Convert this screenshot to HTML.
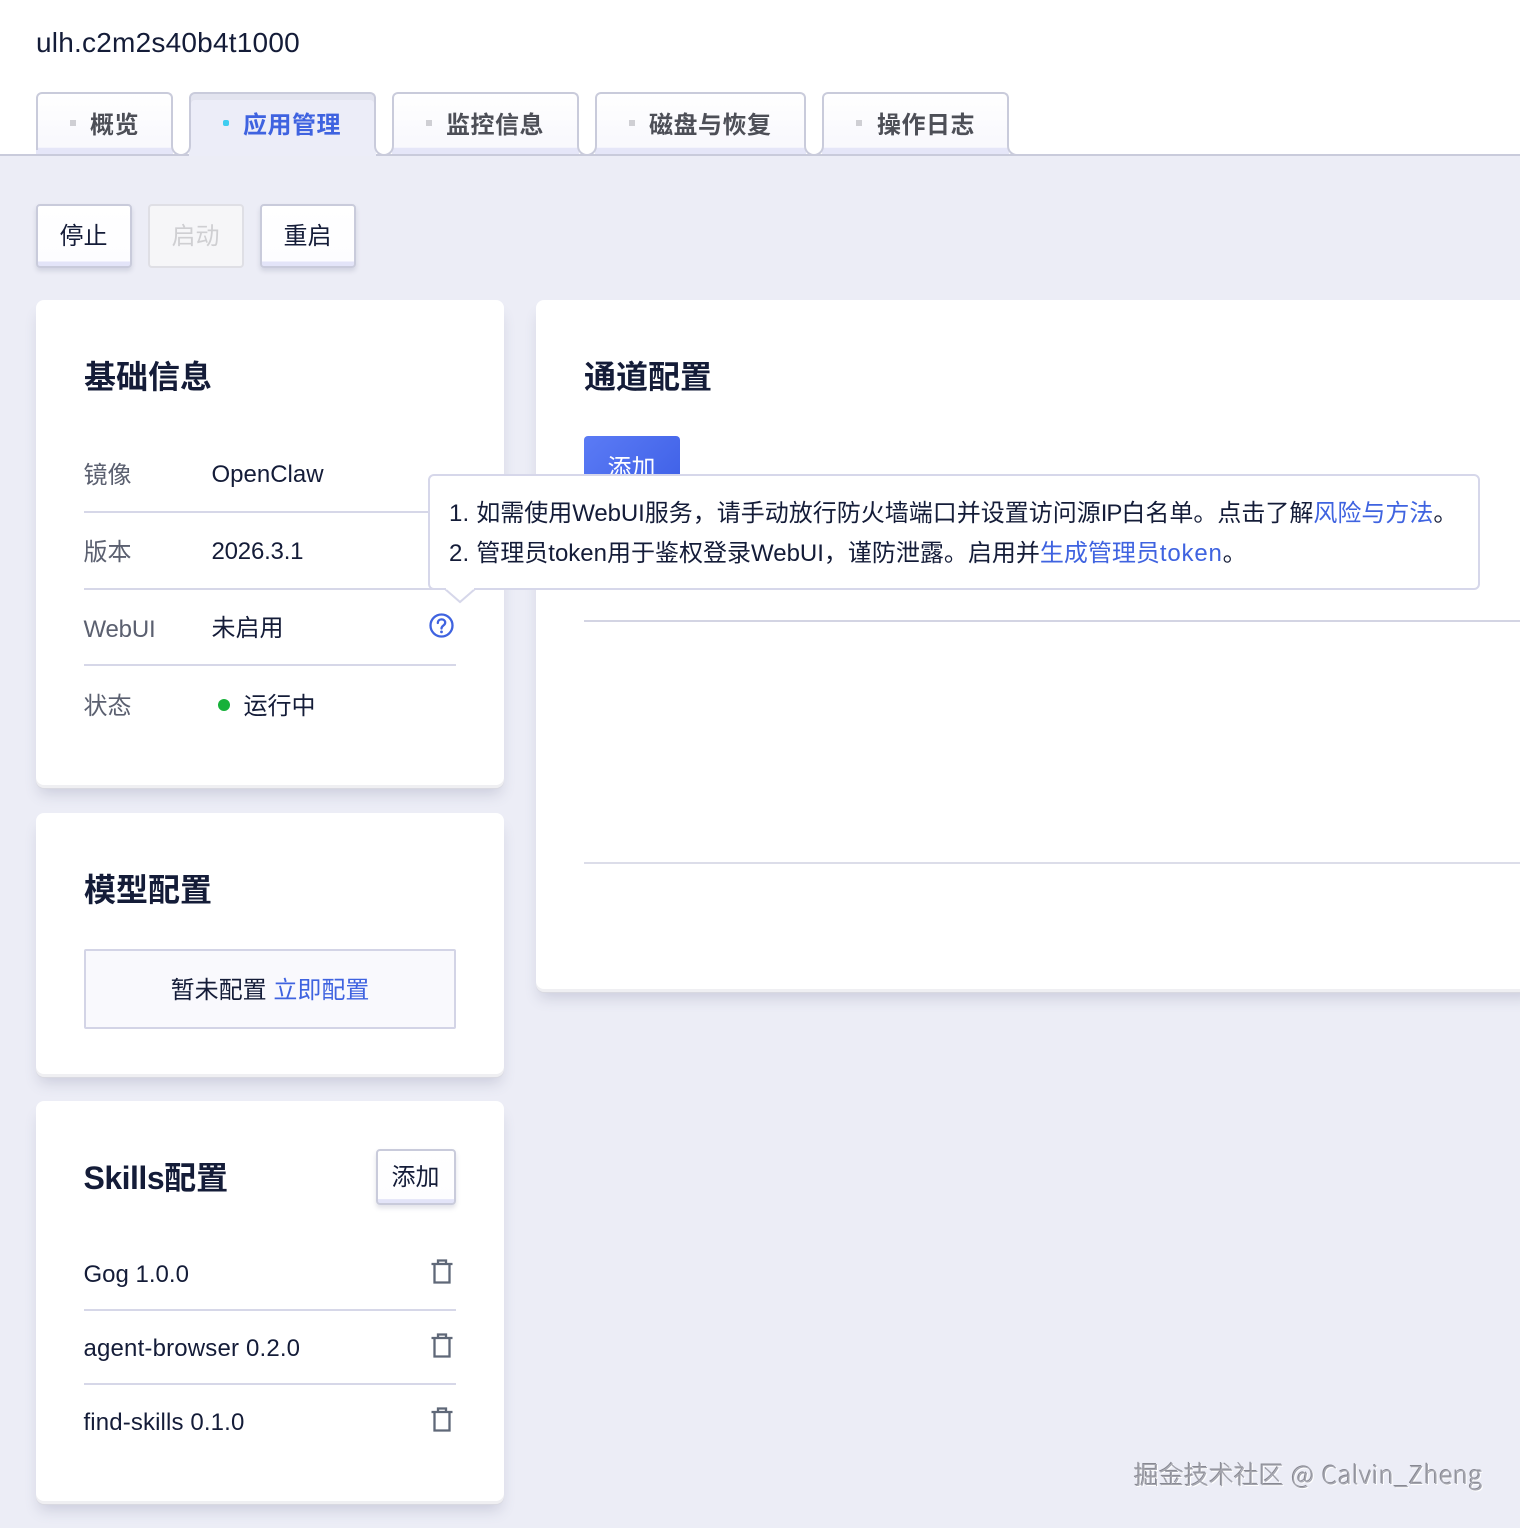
<!DOCTYPE html>
<html lang="zh"><head><meta charset="utf-8"><style>
*{box-sizing:border-box}
html,body{margin:0;padding:0}
body{width:1520px;height:1528px;position:relative;overflow:hidden;background:#ecedf6;font-family:"Liberation Sans","Noto Sans CJK SC",sans-serif;font-size:24px;color:#141c38}
.a{position:absolute;white-space:nowrap;line-height:32px}
.topbar{position:absolute;left:0;top:0;width:1520px;height:156px;background:#fff;border-bottom:2px solid #c9cbdb}
.tab{position:absolute;top:92px;height:46px;border:2px solid #c9cbdb;border-bottom:0;border-radius:6px 6px 0 0;background:linear-gradient(#fff,#f9f9fd);font-weight:700;color:#4d4f57;line-height:60px}
.tab::after{content:"";position:absolute;left:-2px;right:-2px;top:44px;height:16px;background:linear-gradient(#f9f9fd 60%,#e5e6f8 62%)}
.tab.on{background:#ecedf8;color:#3f63e0;box-shadow:inset 0 6px 0 #e3e4ef}
.tab.on::after{height:18px;background:#ecedf8}
.tab i{position:absolute;left:32px;top:26px;width:6px;height:6px;background:#cfcfd4}
.tab.on i{background:#3fcdf0;border-radius:2px}
.tab span{position:absolute;top:2px;white-space:nowrap;letter-spacing:.5px;z-index:1}
.scoop{position:absolute;top:138px;width:20px;height:18px;background:#fff;border:2px solid #c9cbdb;border-top:0;border-radius:0 0 10px 10px}
.btn{position:absolute;border:2px solid #c9cbdb;border-radius:4px;text-align:center;background:linear-gradient(#fff,#fdfdff 92%,#e3e4f8 93%);box-shadow:0 3px 5px rgba(90,95,130,.18)}
.card{position:absolute;background:#fff;border-radius:8px;box-shadow:0 3px 0 #efeff2,0 4px 0 #d9d9e1,0 12px 14px -3px rgba(90,95,130,.22)}
.title{font-size:32px;font-weight:700;color:#141c38;line-height:44px}
.lab{color:#5b6070}
.line{position:absolute;height:2px;background:#d6d7e8}
.blue{color:#3f63e0}
svg{position:absolute;display:block}
</style></head><body>
<div class="topbar"></div>
<div class="a" style="left:36px;top:25px;font-size:28px;line-height:36px;letter-spacing:.22px">ulh.c2m2s40b4t1000</div>

<div class="tab" style="left:36px;width:137px"><i></i><span style="left:52px">概览</span></div>
<div class="tab on" style="left:189px;width:187px"><i></i><span style="left:52px">应用管理</span></div>
<div class="tab" style="left:392px;width:187px"><i></i><span style="left:52px">监控信息</span></div>
<div class="tab" style="left:595px;width:211px"><i></i><span style="left:52px">磁盘与恢复</span></div>
<div class="tab" style="left:822px;width:187px"><i></i><span style="left:53px">操作日志</span></div>
<div class="scoop" style="left:171px"></div>
<div class="scoop" style="left:374px"></div>
<div class="scoop" style="left:577px"></div>
<div class="scoop" style="left:804px"></div>
<div style="position:absolute;left:36px;top:138px;width:2px;height:12px;background:#c9cbdb"></div>
<div style="position:absolute;left:1007px;top:138px;width:14px;height:18px;background:#fff;border-left:2px solid #c9cbdb;border-bottom:2px solid #c9cbdb;border-radius:0 0 0 10px"></div>

<div class="btn" style="left:36px;top:204px;width:96px;height:64px;line-height:62px;text-indent:-1px">停止</div>
<div class="btn" style="left:148px;top:204px;width:96px;height:64px;line-height:62px;text-indent:-1px;color:#cfcfd2;background:#f6f6f8;border-color:#dfdfe5;box-shadow:none">启动</div>
<div class="btn" style="left:260px;top:204px;width:96px;height:64px;line-height:62px;text-indent:-1px">重启</div>

<div class="card" style="left:36px;top:300px;width:468px;height:485px"></div>
<div class="a title" style="left:84px;top:355px">基础信息</div>
<div class="a lab" style="left:83.500px;top:460px">镜像</div><div class="a" style="left:211.500px;top:459px">OpenClaw</div>
<div class="line" style="left:84px;top:511px;width:372px"></div>
<div class="a lab" style="left:83.500px;top:537px">版本</div><div class="a" style="left:211.500px;top:536px;letter-spacing:-.2px">2026.3.1</div>
<div class="line" style="left:84px;top:588px;width:372px"></div>
<div class="a lab" style="left:83.500px;top:614px;letter-spacing:-.2px">WebUI</div><div class="a" style="left:211.500px;top:613px">未启用</div>
<svg style="left:429px;top:613px" width="25" height="25" viewBox="0 0 25 25" fill="none" stroke="#3f63e0" stroke-width="2.300"><circle cx="12.500" cy="12.500" r="11"/><path d="M8.800 10c0-2.200 1.600-3.600 3.700-3.600s3.700 1.300 3.700 3.200c0 2.900-3.700 2.900-3.700 5.900" stroke-linecap="round"/><circle cx="12.500" cy="18.900" r="1.400" fill="#3f63e0" stroke="none"/></svg>
<div class="line" style="left:84px;top:664px;width:372px"></div>
<div class="a lab" style="left:83.500px;top:691px">状态</div>
<div class="a" style="left:218px;top:699px;width:12px;height:12px;border-radius:50%;background:#17b13a"></div>
<div class="a" style="left:243.500px;top:691px">运行中</div>

<div class="card" style="left:36px;top:813px;width:468px;height:261px"></div>
<div class="a title" style="left:84px;top:868px">模型配置</div>
<div style="position:absolute;left:84px;top:949px;width:372px;height:80px;background:#f9f9fd;border:2px solid #d3d4e6;border-radius:2px;text-align:center;line-height:80px">暂未配置 <span class="blue">立即配置</span></div>

<div class="card" style="left:36px;top:1101px;width:468px;height:400px"></div>
<div class="a title" style="left:83.500px;top:1156px"><span style="letter-spacing:-.5px">Skills</span>配置</div>
<div class="btn" style="left:376px;top:1149px;width:80px;height:56px;line-height:54px;text-indent:-1px">添加</div>
<div class="a" style="left:83.500px;top:1259px">Gog 1.0.0</div>
<div class="line" style="left:84px;top:1309px;width:372px"></div>
<div class="a" style="left:83.500px;top:1333px;letter-spacing:.17px">agent-browser 0.2.0</div>
<div class="line" style="left:84px;top:1383px;width:372px"></div>
<div class="a" style="left:83.500px;top:1407px;letter-spacing:.13px">find-skills 0.1.0</div>
<svg style="left:429.500px;top:1259px" width="24" height="26" viewBox="0 0 24 26" fill="none" stroke="#5f6878" stroke-width="2.300"><path d="M1.500 5h21M4.500 5v18.500h15V5M8 5V1.500h8V5"/></svg>
<svg style="left:429.500px;top:1333px" width="24" height="26" viewBox="0 0 24 26" fill="none" stroke="#5f6878" stroke-width="2.300"><path d="M1.500 5h21M4.500 5v18.500h15V5M8 5V1.500h8V5"/></svg>
<svg style="left:429.500px;top:1407px" width="24" height="26" viewBox="0 0 24 26" fill="none" stroke="#5f6878" stroke-width="2.300"><path d="M1.500 5h21M4.500 5v18.500h15V5M8 5V1.500h8V5"/></svg>

<div class="card" style="left:536px;top:300px;width:1000px;height:689px"></div>
<div class="a title" style="left:584px;top:355px">通道配置</div>
<div style="position:absolute;left:584px;top:436px;width:96px;height:60px;background:linear-gradient(135deg,#5b7bf5,#3d5fe6);border-radius:4px;color:#fff;text-align:center;line-height:65px;text-indent:-1px">添加</div>
<div class="line" style="left:584px;top:620px;width:936px;background:#d3d4e3"></div>
<div class="line" style="left:584px;top:862px;width:936px;background:#dcdde9"></div>

<div style="position:absolute;left:428px;top:474px;width:1052px;height:116px;background:#fff;border:2px solid #d6d7ea;border-radius:6px"></div>
<svg style="left:444px;top:588px" width="32" height="16" viewBox="0 0 32 16"><path d="M1 1L16 14L31 1" fill="#fff" stroke="#d6d7ea" stroke-width="2"/><path d="M2 0h28v1.500H2z" fill="#fff"/></svg>
<div class="a" style="left:449px;top:498px"><span style="letter-spacing:.2px">1. </span>如需使用<span style="letter-spacing:-.1px">WebUI</span>服务，请手动放行防火墙端口并设置访问源<span style="letter-spacing:-1px">IP</span>白名单。点击了解<span class="blue">风险与方法</span>。</div>
<div class="a" style="left:449px;top:538px"><span style="letter-spacing:.2px">2. </span>管理员token用于鉴权登录WebUI，谨防泄露。启用并<span class="blue">生成管理员<span style="letter-spacing:.8px">token</span></span>。</div>

<div class="a" style="left:1134px;top:1458px;font-family:'Noto Sans CJK SC','Liberation Sans',sans-serif;font-size:25px;font-weight:300;color:#a4a5ae;text-shadow:-1px -1px 0 rgba(70,70,80,.6),1px 1px 0 #fff">掘金技术社区 <span style="margin-left:2px">@</span> <span style="letter-spacing:.5px;margin-left:2px">Calvin_Zheng</span></div>
</body></html>
